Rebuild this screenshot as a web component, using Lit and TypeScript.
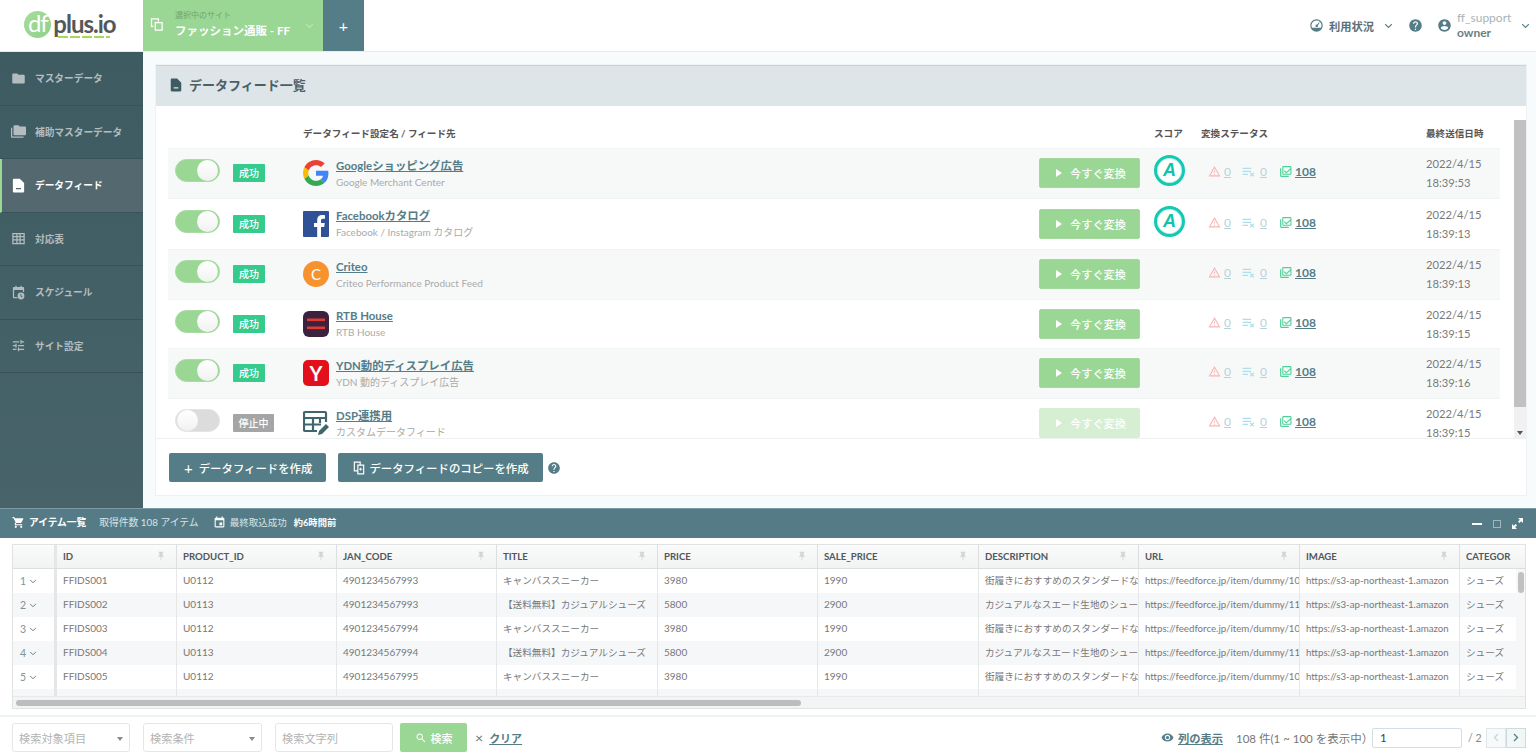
import { LitElement, html, css } from "lit";
import { customElement } from "lit/decorators.js";

const icon = (d: string, cls = "") => html`<svg class="ic ${cls}" viewBox="0 0 24 24" fill="currentColor"><path d="${d}"></path></svg>`;
const P = {
  folder: "M10 4H4c-1.1 0-2 .9-2 2v12c0 1.1.9 2 2 2h16c1.1 0 2-.9 2-2V8c0-1.1-.9-2-2-2h-8l-2-2z",
  folders: "M2 6H0v14c0 1.1.9 2 2 2h18v-2H2V6zm20-2h-8l-2-2H6c-1.1 0-2 .9-2 2v12c0 1.1.9 2 2 2h16c1.1 0 2-.9 2-2V6c0-1.1-.9-2-2-2z",
  file: "M14 1H5C3.9 1 3 1.9 3 3v18c0 1.1.9 2 2 2h14c1.1 0 2-.9 2-2V8l-7-7zM8 16h8v2H8v-2z",
  table: "M2 3h20v18H2V3zm2 2v3h4.500V5H4zm6.500 0v3h3V5h-3zm5 0v3H20V5h-4.500zM4 10v3h4.500v-3H4zm6.500 0v3h3v-3h-3zm5 0v3H20v-3h-4.500zM4 15v4h4.500v-4H4zm6.500 0v4h3v-4h-3zm5 0v4H20v-4h-4.500z",
  sched: "M7 1h2v2h6V1h2v2h2c1.100 0 2 .9 2 2v6h-2V8H5v11h5v2H5c-1.100 0-2-.9-2-2V5c0-1.100.9-2 2-2h2V1zm9 11a5.500 5.500 0 1 1 0 11 5.500 5.500 0 0 1 0-11zm-.8 2.500v3.400l2.600 1.500.7-1.100-2-1.200v-2.600h-1.300z",
  tune: "M3 17v2h6v-2H3zM3 5v2h10V5H3zm10 16v-2h8v-2h-8v-2h-2v6h2zM7 9v2H3v2h4v2h2V9H7zm14 4v-2H11v2h10zm-6-4h2V7h4V5h-4V3h-2v6z",
  cart: "M7 18c-1.100 0-1.990.9-1.990 2S5.900 22 7 22s2-.9 2-2-.9-2-2-2zM1 2v2h2l3.600 7.590-1.350 2.450c-.16.28-.25.61-.25.96 0 1.100.9 2 2 2h12v-2H7.420c-.14 0-.25-.11-.25-.25l.03-.12.9-1.630h7.450c.75 0 1.410-.41 1.750-1.030l3.580-6.490c.08-.14.12-.31.12-.48 0-.55-.45-1-1-1H5.210l-.94-2H1zm16 16c-1.100 0-1.990.9-1.990 2s.89 2 1.990 2 2-.9 2-2-.9-2-2-2z",
  event: "M17 12h-5v5h5v-5zM16 1v2H8V1H6v2H5c-1.110 0-1.990.9-1.990 2L3 19c0 1.100.89 2 2 2h14c1.100 0 2-.9 2-2V5c0-1.100-.9-2-2-2h-1V1h-2zm3 18H5V8h14v11z",
  help: "M12 2C6.480 2 2 6.480 2 12s4.480 10 10 10 10-4.480 10-10S17.520 2 12 2zm1 17h-2v-2h2v2zm2.070-7.750l-.9.920C13.450 12.900 13 13.500 13 15h-2v-.5c0-1.100.45-2.100 1.170-2.830l1.240-1.260c.37-.36.59-.86.59-1.410 0-1.100-.9-2-2-2s-2 .9-2 2H8c0-2.210 1.790-4 4-4s4 1.790 4 4c0 .88-.36 1.680-.93 2.250z",
  user: "M12 2C6.480 2 2 6.480 2 12s4.480 10 10 10 10-4.480 10-10S17.520 2 12 2zm0 3c1.660 0 3 1.340 3 3s-1.340 3-3 3-3-1.340-3-3 1.340-3 3-3zm0 14.200c-2.500 0-4.710-1.280-6-3.220.03-1.990 4-3.080 6-3.080 1.990 0 5.970 1.090 6 3.080-1.290 1.940-3.500 3.220-6 3.220z",
  gauge: "M12 2a10 10 0 1 0 0 20 10 10 0 0 0 0-20zm0 2a8 8 0 0 1 8 8c0 1.200-.27 2.400-.78 3.400H4.780A8 8 0 0 1 12 4zm3.900 2.700-3.100 3.900a2 2 0 1 0 1.500 1.300l2.700-4.600-1.100-.6z",
  eye: "M12 4.500C7 4.500 2.730 7.610 1 12c1.730 4.390 6 7.500 11 7.500s9.270-3.110 11-7.500c-1.730-4.390-6-7.500-11-7.500zM12 17c-2.760 0-5-2.240-5-5s2.240-5 5-5 5 2.240 5 5-2.240 5-5 5zm0-8c-1.660 0-3 1.340-3 3s1.340 3 3 3 3-1.340 3-3-1.340-3-3-3z",
  warn: "M12 5.990L19.530 19H4.470L12 5.990M12 2L1 21h22L12 2zm1 14h-2v2h2v-2zm0-6h-2v4h2v-4z",
  search: "M15.500 14h-.79l-.28-.27C15.410 12.590 16 11.110 16 9.500 16 5.910 13.090 3 9.500 3S3 5.910 3 9.500 5.910 16 9.500 16c1.610 0 3.090-.59 4.230-1.570l.27.28v.79l5 4.990L20.490 19l-4.990-5zm-6 0C7.010 14 5 11.990 5 9.500S7.010 5 9.500 5 14 7.010 14 9.500 11.990 14 9.500 14z",
  pin: "M16 9V4h1c.55 0 1-.45 1-1s-.45-1-1-1H7c-.55 0-1 .45-1 1s.45 1 1 1h1v5c0 1.660-1.340 3-3 3v2h5.970v7l1 1 1-1v-7H19v-2c-1.660 0-3-1.340-3-3z",
  listx: "M1 5h16v2.600H1V5zm0 5.500h16v2.600H1v-2.600zM1 16h10v2.600H1V16zm13.500-1 1.500-1.500 2.500 2.500 2.500-2.500 1.500 1.500-2.500 2.500 2.500 2.500-1.500 1.500-2.500-2.500-2.500 2.500-1.500-1.500 2.500-2.500-2.500-2.500z",
  check: "M2 6h2.200v14H18v2H4c-1.100 0-2-.9-2-2V6zm6-4h13c1.100 0 2 .9 2 2v12c0 1.100-.9 2-2 2H8c-1.100 0-2-.9-2-2V4c0-1.100.9-2 2-2zm0 2.200V16h13V8.800l-7.300 7-4.900-4.700 1.500-1.500 3.400 3.200 7.300-7V4.200H8z",
  copy: "M3 1h12v5h6v17H9v-5H3V1zm2 2v13h4V6h4V3H5zm6 5v13h8V8h-8zm1.500 5.500 2.300-2.300 1.100 1.100-1.100 1h2.700v1.500h-2.700l1.100 1-1.100 1.100-2.300-2.300v-1.100z",
  site: "M3 2h13v5h-2V4H5v10h2v2H3V2zm6 6h13v14H9V8zm2 2v10h9V10h-9z",
};

const chev = (cls = "") => html`<svg class="chev ${cls}" viewBox="0 0 12 8" fill="none" stroke="currentColor" stroke-width="1.500"><path d="M1.500 1.500 6 6l4.500-4.500"></path></svg>`;

const G = html`<svg class="logo" viewBox="0 0 48 48">
  <path fill="#EA4335" d="M24 9.500c3.540 0 6.710 1.220 9.210 3.600l6.850-6.850C35.900 2.380 30.470 0 24 0 14.620 0 6.510 5.380 2.560 13.220l7.980 6.190C12.430 13.720 17.740 9.500 24 9.500z"></path>
  <path fill="#4285F4" d="M46.980 24.550c0-1.570-.15-3.090-.38-4.550H24v9.020h12.940c-.58 2.960-2.260 5.480-4.780 7.180l7.730 6c4.510-4.180 7.090-10.360 7.090-17.650z"></path>
  <path fill="#FBBC05" d="M10.530 28.590c-.48-1.450-.76-2.990-.76-4.590s.27-3.140.76-4.590l-7.980-6.190C.92 16.460 0 20.120 0 24c0 3.880.92 7.540 2.560 10.780l7.970-6.190z"></path>
  <path fill="#34A853" d="M24 48c6.480 0 11.930-2.130 15.890-5.810l-7.730-6c-2.150 1.450-4.920 2.300-8.160 2.300-6.260 0-11.570-4.220-13.470-9.910l-7.980 6.190C6.510 42.620 14.620 48 24 48z"></path>
</svg>`;
const FB = html`<svg class="logo" viewBox="0 0 26 26"><rect width="26" height="26" rx="1" fill="#2f5196"></rect><path fill="#fff" d="M18 26V16h3.200l.5-3.900H18V9.700c0-1.100.4-1.900 2-1.900h2V4.300c-.4 0-1.600-.2-2.900-.2-2.900 0-4.900 1.800-4.900 5v3H11V16h3.200v10H18z"></path></svg>`;
const CR = html`<svg class="logo" viewBox="0 0 26 26"><circle cx="13" cy="13" r="13" fill="#f7932e"></circle></svg><span class="logo-letter">C</span>`;
const RTB = html`<svg class="logo" viewBox="0 0 26 26"><rect width="26" height="26" rx="6" fill="#3b2340"></rect><rect x="4" y="7.500" width="18" height="2.600" fill="#e23a33"></rect><rect x="4" y="15.500" width="18" height="2.600" fill="#e23a33"></rect></svg>`;
const Y = html`<svg class="logo" viewBox="0 0 26 26"><rect width="26" height="26" rx="5" fill="#e30f1c"></rect></svg><span class="logo-letter y">Y</span>`;
const DSP = html`<svg class="logo" viewBox="0 0 26 26" fill="none" stroke="#3f666d" stroke-width="2.200"><path d="M14 21H2a1 1 0 0 1-1-1V3a1 1 0 0 1 1-1h20a1 1 0 0 1 1 1v9"></path><path d="M1 8h22M10 8V21M1 14.500h17M17 8V13"></path><path d="M15 25l1-4 7-7 3 3-7 7-4 1z" fill="#3f666d" stroke="none"></path></svg>`;

interface Feed { on: boolean; name: string; sub: string; logo: unknown; score: boolean; date: string; time: string; h: number; }
const feeds: Feed[] = [
  { on: true, name: "Googleショッピング広告", sub: "Google Merchant Center", logo: G, score: true, date: "2022/4/15", time: "18:39:53", h: 50 },
  { on: true, name: "Facebookカタログ", sub: "Facebook / Instagram カタログ", logo: FB, score: true, date: "2022/4/15", time: "18:39:13", h: 51 },
  { on: true, name: "Criteo", sub: "Criteo Performance Product Feed", logo: CR, score: false, date: "2022/4/15", time: "18:39:13", h: 50 },
  { on: true, name: "RTB House", sub: "RTB House", logo: RTB, score: false, date: "2022/4/15", time: "18:39:15", h: 49 },
  { on: true, name: "YDN動的ディスプレイ広告", sub: "YDN 動的ディスプレイ広告", logo: Y, score: false, date: "2022/4/15", time: "18:39:16", h: 50 },
  { on: false, name: "DSP連携用", sub: "カスタムデータフィード", logo: DSP, score: false, date: "2022/4/15", time: "18:39:15", h: 50 },
];

const nav = [
  { t: "マスターデータ", i: P.folder }, { t: "補助マスターデータ", i: P.folders }, { t: "データフィード", i: P.file, on: true },
  { t: "対応表", i: P.table }, { t: "スケジュール", i: P.sched }, { t: "サイト設定", i: P.tune },
];

const cols = ["ID", "PRODUCT_ID", "JAN_CODE", "TITLE", "PRICE", "SALE_PRICE", "DESCRIPTION", "URL", "IMAGE", "CATEGOR"];
const row = (n: number) => {
  const a = n % 2 === 1;
  const jan = 4901234567993 + Math.floor((n - 1) / 2);
  return [
    "FFIDS00" + n, a ? "U0112" : "U0113", String(jan),
    a ? "キャンバススニーカー" : "【送料無料】カジュアルシューズ",
    a ? "3980" : "5800", a ? "1990" : "2900",
    a ? "街履きにおすすめのスタンダードな" : "カジュアルなスエード生地のシュー",
    a ? "https://feedforce.jp/item/dummy/10" : "https://feedforce.jp/item/dummy/11",
    "https://s3-ap-northeast-1.amazon", "シューズ",
  ];
};

@customElement("app-root")
export class AppRoot extends LitElement {
  static styles = css`
    :host { display: flex; flex-direction: column; width: 1536px; height: 755px; overflow: hidden; background: #fff; color: #666;
      font-family: "Lato", "Noto Sans CJK JP", sans-serif; font-size: 12px; }
    * { box-sizing: border-box; }
    .ic { width: 14px; height: 14px; flex: none; display: block; }
    .chev { width: 9px; height: 6px; flex: none; display: block; }

    header { height: 52px; flex: none; display: flex; border-bottom: 1px solid #e6ecee; }
    .brand { width: 143px; flex: none; display: flex; align-items: center; justify-content: center; padding: 0 3px 3px 0; }
    .mark { width: 27px; height: 27px; border-radius: 50%; background: linear-gradient(135deg, #a7dc9a, #8fd18a); color: #fff; font-weight: 400; font-size: 24px; line-height: 24px; text-align: center; letter-spacing: -1px; margin-right: 2px; }
    .word { position: relative; color: #55585a; font-weight: 700; font-size: 24px; letter-spacing: -1px; line-height: 28px; }
    .word::after { content: ""; position: absolute; left: 5px; right: 6px; bottom: 0; height: 2px; background: repeating-linear-gradient(90deg, #a6d95a 0 10px, transparent 10px 12px); }
    .site { width: 180px; flex: none; height: 51px; background: #9ad694; color: #fff; display: flex; align-items: center; padding: 0 9px 0 6px; }
    .site .ic { width: 15px; height: 15px; margin-right: 12px; margin-top: -2px; }
    .site .tx { flex: 1; margin-left: -1px; }
    .site small { display: block; font-size: 8px; color: #6fa56e; line-height: 11px; margin-top: -1px; }
    .site b { display: block; font-size: 11.500px; font-weight: 700; line-height: 20px; }
    .site .chev { color: #c4e6bd; }
    .add { width: 41px; flex: none; height: 51px; background: #557d87; color: #fff; display: flex; align-items: center; justify-content: center; font-size: 16px; }
    .hr { margin-left: auto; display: flex; align-items: center; color: #557d87; padding-right: 6px; }
    .hr .ic { width: 15px; height: 15px; }
    .hr b { font-size: 11.250px; color: #5d7077; margin-left: 5px; font-weight: 700; }
    .hr .g1 { margin-right: 15px; }
    .hr .g1 .chev { margin-left: 10px; }
    .hr .g { display: flex; align-items: center; }
    .hr .help { margin-right: 14px; }
    .hr .usr { line-height: 15px; margin: 0 9px 2px 5px; font-size: 12px; width: 55px; }
    .hr .usr span { color: #a9b4b8; display: block; }
    .hr .usr em { font-style: normal; font-weight: 700; color: #6c7f85; display: block; }

    .mid { flex: none; height: 456px; display: flex; }
    nav { width: 143px; flex: none; background: linear-gradient(180deg, #3e5b62, #48646a); }
    .ni { height: 53.500px; display: flex; align-items: center; padding-left: 11px; color: #b3bdc0; font-size: 9.700px; font-weight: 700; border-bottom: 1px solid #38525a; }
    .ni .ic { width: 15px; height: 15px; margin-right: 9px; color: #b3bdc0; }
    .ni.on { background: #54696f; color: #fff; border-left: 2px solid #9ad694; padding-left: 9px; }
    .ni.on .ic { color: #fff; }
    main { flex: 1; min-width: 0; background: #f8fbfc; padding: 12px 9px 12px 12px; }
    .panel { height: 100%; background: #fff; border: 1px solid #eef2f3; display: flex; flex-direction: column; }
    .ph { height: 41px; flex: none; background: #dde5e8; border-top: 1px solid #c9d4d8; display: flex; align-items: center; padding: 0 0 3px 13px; color: #4c5f66; font-size: 13px; font-weight: 700; }
    .ph .ic { margin-right: 6px; width: 14px; height: 14px; color: #3e5b62; }
    .pb { flex: none; height: 332px; display: flex; padding-left: 12px; padding-right: 1px; }
    .list { width: 1332px; flex: none; overflow: hidden; margin-top: 14px; }
    .fhead, .feed { display: grid; grid-template-columns: 65px 70px 33px 1fr 115px 47px 225px 74px; align-items: center; }
    .fhead { height: 28px; font-size: 9.600px; font-weight: 700; color: #555; padding-bottom: 2px; }
    .fname { margin-left: -33px; white-space: nowrap; }
    .feed { border-top: 1px solid #f1f4f5; overflow: hidden; flex: none; }
    .feed:nth-child(even) { background: #f7f9f9; }
    .tg { margin: 0 0 6px 7px; width: 45px; height: 23px; border-radius: 12px; background: #9ad694; border: 1px solid #a9dca3; position: relative; }
    .tg::after { content: ""; position: absolute; right: 1px; top: 0; width: 21px; height: 21px; border-radius: 50%; background: linear-gradient(180deg, #fff, #f0f2f0); }
    .tg.off { background: #dcdcdc; border-color: #e4e4e4; }
    .tg.off::after { right: auto; left: 1px; }
    .bdw { margin-bottom: 1px; }
    .bd { display: inline-block; height: 18px; line-height: 18px; width: 32px; text-align: center; border-radius: 1px; background: #35cb8d; color: #fff; font-size: 10px; font-weight: 500; }
    .bd.off { width: 41px; background: #a5a5a5; }
    .lg { position: relative; width: 26px; height: 26px; margin-bottom: 1px; }
    .logo { width: 26px; height: 26px; display: block; }
    .logo-letter { position: absolute; inset: 0; color: #fff; text-align: center; font-size: 15px; line-height: 26px; font-weight: 400; }
    .logo-letter.y { font-size: 20px; font-weight: 700; }
    .nm a { display: block; color: #557d87; font-size: 11.400px; font-weight: 700; text-decoration: underline; line-height: 17px; }
    .nm span { display: block; color: #aaa; font-size: 10px; line-height: 17px; }
    .run { width: 101px; height: 30px; margin-bottom: 1px; padding-left: 3px; border-radius: 2px; background: #9ad694; color: #fff; font-size: 11.200px; font-weight: 500; display: flex; align-items: center; justify-content: center; gap: 8px; border: 1px solid #a3d99d; }
    .run.off { background: #d6efd3; border-color: #d6efd3; }
    .tri { width: 0; height: 0; border-left: 6px solid #fff; border-top: 4px solid transparent; border-bottom: 4px solid transparent; }
    .sc { margin-bottom: 6px; min-height: 1px; }
    .score { width: 31px; height: 31px; border-radius: 50%; background: #fff; border: 3.500px solid #14c8b2; color: #10c3ab; font-family: "Liberation Sans", sans-serif; font-weight: 700; font-style: italic; font-size: 18px; line-height: 24px; text-align: center; box-shadow: inset 0 0 0 1px #bfeee7; }
    .st { display: flex; align-items: center; padding-left: 7px; font-size: 12px; margin-bottom: 4px; }
    .st .ic { width: 13px; height: 13px; }
    .st u { margin-left: 3px; }
    .st .r { color: #fbb4b4; } .st .b { color: #aadfec; } .st .gr { color: #4fd09a; }
    .st u.z { color: #b9d2d8; width: 15px; } .st u.n { color: #557d87; font-weight: 700; }
    .st .s1 { margin-right: 3px; } .st .s2 { margin-right: 4px; }
    .st u.z2 { margin-left: 5px; }
    .dt { font-size: 11.200px; line-height: 19px; color: #7a7a7a; white-space: nowrap; margin-bottom: 1px; }
    .vs { margin-left: 14px; width: 12px; margin-top: 14px; flex: none; background: #f1f1f1; display: flex; flex-direction: column; align-items: center; }
    .vs i { display: block; width: 100%; height: 287px; background: #c1c1c1; }
    .vs s { margin-top: auto; margin-bottom: 3px; width: 0; height: 0; border-top: 4px solid #555; border-left: 3px solid transparent; border-right: 3px solid transparent; }
    .pf { flex: 1; border-top: 1px solid #eef1f2; display: flex; align-items: center; padding: 1px 0 0 13px; }
    .btn { height: 29px; background: #557d87; color: #fff; font-size: 11.400px; font-weight: 500; border-radius: 2px; display: flex; align-items: center; padding: 0 14px; white-space: nowrap; }
    .btn .ic { width: 14px; height: 14px; margin-right: 3px; }
    .btn .plus { font-size: 15px; font-weight: 400; margin: 0 6px 0 1px; }
    .btn + .btn { margin-left: 12px; }
    .qm { width: 13px; height: 13px; color: #557d87; margin-left: 4px; }

    .bar { height: 30px; flex: none; background: #557c86; color: #fff; display: flex; align-items: center; padding: 0 9px 3px 12px; font-size: 9.800px; border-top: 1px solid #7b9aa2; }
    .bar .ic { width: 13px; height: 13px; }
    .bar b { font-size: 9.700px; font-weight: 700; margin-left: 4px; }
    .bar span { color: #d8e3e6; }
    .bar .a { margin-left: 13px; margin-right: 14px; }
    .bar .l { margin-left: 4px; margin-right: 7px; font-size: 9.500px; }
    .bar b.e { margin-left: 0; font-size: 9.300px; }
    .wc { margin-left: auto; display: flex; margin-top: 3px; }
    .wc div { width: 20px; height: 20px; display: flex; align-items: center; justify-content: center; }
    .wc .min { width: 10px; height: 2px; background: #fff; }
    .wc .max { width: 8px; height: 8px; border: 1px solid #9fb7bd; }
    .wrap { flex: none; height: 179px; padding: 6px 10px 7px 12px; border-bottom: 2px solid #edf2f3; }
    .grid { height: 165px; border: 1px solid #dfe3e4; display: flex; flex-direction: column; overflow: hidden; }
    .tr { display: grid; grid-template-columns: 44px 120px 160px 160px 161px 160px 161px 160px 161px 160px 66px; width: 1513px; flex: none; }
    .thead { height: 24px; background: linear-gradient(180deg, #fbfbfb, #f1f2f2); border-bottom: 1px solid #dcdfe0; }
    .th { font-size: 9.600px; font-weight: 700; color: #50585c; display: flex; align-items: center; padding-left: 6px; border-right: 1px solid #dcdfe0; position: relative; min-width: 0; overflow: hidden; white-space: nowrap; }
    .th:first-child, .td:first-child { border-right: 3px solid #e4e6e7; padding-left: 0; }
    .th:last-child, .td:last-child { border-right: 0; }
    .th .ic { position: absolute; right: 10px; top: 6px; width: 10px; height: 10px; color: #d0d5d6; }
    .tbody { display: flex; height: 127px; flex: none; }
    .rows { width: 1503px; flex: none; overflow: hidden; }
    .rows .tr { height: 24px; width: 1503px; grid-template-columns: 44px 120px 160px 160px 161px 160px 161px 160px 161px 160px 56px; }
    .rows .tr:nth-child(even) { background: #f5f7f8; }
    .td { font-size: 10px; color: #787878; padding-left: 6px; line-height: 23px; border-right: 1px solid #e5e7e8; white-space: nowrap; overflow: hidden; min-width: 0; }
    .td.jp { font-size: 9.650px; }
    .td.u { font-size: 9.700px; }
    .td.idx { display: flex; align-items: center; gap: 3px; color: #7f9499; padding-left: 7px; font-size: 10.500px; }
    .td.idx .chev { width: 8px; height: 5px; color: #557d87; }
    .vb { flex: 1; background: #f7f7f7; }
    .vb i { display: block; width: 6px; height: 21px; margin: 3px auto 0; border-radius: 3px; background: #c1c1c1; }
    .hb { flex: 1; min-height: 0; background: #f3f4f4; border-top: 1px solid #e7e9ea; display: flex; align-items: center; padding-left: 3px; }
    .hb i { display: block; width: 785px; height: 6px; border-radius: 3px; background: #bdbdbd; }

    .tools { flex: 1; display: flex; align-items: center; padding: 3px 10px 0 12px; }
    .sel, .inp { width: 118px; height: 29px; border: 1px solid #e3e7e8; border-radius: 3px; color: #b3b3b3; font-size: 11.200px; display: flex; align-items: center; padding: 0 6px; position: relative; }
    .sel { margin-right: 13px; }
    .sel.w { width: 119px; }
    .sel::after { content: ""; position: absolute; right: 6px; top: 13px; border-top: 4px solid #8a8a8a; border-left: 3.500px solid transparent; border-right: 3.500px solid transparent; }
    .inp { margin-right: 7px; }
    .go { width: 67px; height: 29px; border-radius: 2px; background: #9ad694; color: #fff; font-size: 11px; font-weight: 500; display: flex; align-items: center; justify-content: center; gap: 4px; }
    .go .ic { width: 12px; height: 12px; }
    .clr { margin-left: 8px; color: #557d87; font-size: 11px; font-weight: 700; display: flex; align-items: center; gap: 6px; }
    .clr span { font-weight: 400; font-size: 14px; }
    .pg { margin-left: auto; display: flex; align-items: center; }
    .pg .cols { display: flex; align-items: center; color: #557d87; font-weight: 700; font-size: 11.250px; margin-right: 13px; gap: 4px; white-space: nowrap; }
    .pg .cols .ic { width: 13px; height: 13px; }
    .pg .cnt { font-size: 11.500px; color: #777; width: 136px; white-space: nowrap; }
    .pg .box { width: 90px; height: 20px; border: 1px solid #d3e0e3; border-radius: 2px; font-size: 11.500px; color: #444; padding-left: 7px; line-height: 18px; }
    .pg .of { font-size: 10.500px; color: #888; margin: 0 7px 0 6px; width: 11px; white-space: nowrap; }
    .pb2 { width: 20px; height: 20px; border: 1px solid #dde7ea; background: #f7fafa; display: flex; align-items: center; justify-content: center; color: #ccd6d8; }
    .pb2.n { color: #557d87; background: #f1f6f7; border-color: #cddbdf; }
    .pb2 svg { width: 6px; height: 9px; }
  `;

  render() {
    return html`
      <header>
        <div class="brand"><div class="mark">df</div><div class="word">plus.io</div></div>
        <div class="site">
          ${icon(P.site)}
          <div class="tx"><small>選択中のサイト</small><b>ファッション通販 - FF</b></div>
          ${chev()}
        </div>
        <div class="add">+</div>
        <div class="hr">
          <div class="g g1">${icon(P.gauge)}<b>利用状況</b>${chev()}</div>
          <div class="g help">${icon(P.help)}</div>
          <div class="g">${icon(P.user)}<div class="usr"><span>ff_support</span><em>owner</em></div>${chev()}</div>
        </div>
      </header>
      <div class="mid">
        <nav>${nav.map((n) => html`<div class="ni ${n.on ? "on" : ""}">${icon(n.i)}${n.t}</div>`)}</nav>
        <main>
          <div class="panel">
            <div class="ph">${icon(P.file)}データフィード一覧</div>
            <div class="pb">
              <div class="list">
                <div class="fhead"><div></div><div></div><div></div><div class="fname">データフィード設定名 / フィード先</div><div></div><div>スコア</div><div>変換ステータス</div><div>最終送信日時</div></div>
                ${feeds.map((f) => html`
                  <div class="feed" style="height:${f.h}px">
                    <div class="tg ${f.on ? "" : "off"}"></div>
                    <div class="bdw"><span class="bd ${f.on ? "" : "off"}">${f.on ? "成功" : "停止中"}</span></div>
                    <div class="lg">${f.logo}</div>
                    <div class="nm"><a>${f.name}</a><span>${f.sub}</span></div>
                    <div class="run ${f.on ? "" : "off"}"><i class="tri"></i>今すぐ変換</div>
                    <div class="sc">${f.score ? html`<div class="score">A</div>` : ""}</div>
                    <div class="st">
                      <span class="r">${icon(P.warn)}</span><u class="z">0</u><span class="s1"></span>
                      <span class="b">${icon(P.listx)}</span><u class="z z2">0</u><span class="s2"></span>
                      <span class="gr">${icon(P.check)}</span><u class="n">108</u>
                    </div>
                    <div class="dt">${f.date}<br />${f.time}</div>
                  </div>`)}
              </div>
              <div class="vs"><i></i><s></s></div>
            </div>
            <div class="pf">
              <div class="btn"><span class="plus">+</span>データフィードを作成</div>
              <div class="btn">${icon(P.copy)}データフィードのコピーを作成</div>
              <span class="qm">${icon(P.help)}</span>
            </div>
          </div>
        </main>
      </div>
      <div class="bar">
        ${icon(P.cart)}<b>アイテム一覧</b><span class="a">取得件数 108 アイテム</span>
        ${icon(P.event)}<span class="l">最終取込成功</span><b class="e">約6時間前</b>
        <div class="wc"><div><i class="min"></i></div><div><i class="max"></i></div><div><svg width="11" height="11" viewBox="0 0 11 11" fill="#fff"><path d="M6 0h5v5L9.200 3.200 7.300 5 6 3.700 7.800 1.800zM5 11H0V6l1.800 1.800L3.700 6 5 7.300 3.200 9.200z"></path></svg></div></div>
      </div>
      <div class="wrap">
        <div class="grid">
          <div class="tr thead"><div class="th"></div>${cols.map((c, i) => html`<div class="th">${c}${i < 9 ? icon(P.pin) : ""}</div>`)}</div>
          <div class="tbody">
            <div class="rows">
              ${[1, 2, 3, 4, 5, 6].map((n) => html`<div class="tr">
                <div class="td idx">${n} ${chev()}</div>
                ${row(n).map((v, i) => html`<div class="td ${i === 3 || i === 6 || i === 9 ? "jp" : ""} ${i === 7 || i === 8 ? "u" : ""}">${v}</div>`)}
              </div>`)}
            </div>
            <div class="vb"><i></i></div>
          </div>
          <div class="hb"><i></i></div>
        </div>
      </div>
      <div class="tools">
        <div class="sel">検索対象項目</div>
        <div class="sel w">検索条件</div>
        <div class="inp">検索文字列</div>
        <div class="go">${icon(P.search)}検索</div>
        <div class="clr"><span>×</span><u>クリア</u></div>
        <div class="pg">
          <div class="cols">${icon(P.eye)}<u>列の表示</u></div>
          <div class="cnt">108 件(1 ~ 100 を表示中）</div>
          <div class="box">1</div>
          <div class="of">/ 2</div>
          <div class="pb2"><svg viewBox="0 0 6 9" fill="none" stroke="currentColor" stroke-width="1.300"><path d="M5 1 1.500 4.500 5 8"></path></svg></div>
          <div class="pb2 n"><svg viewBox="0 0 6 9" fill="none" stroke="currentColor" stroke-width="1.300"><path d="M1 1l3.500 3.500L1 8"></path></svg></div>
        </div>
      </div>
    `;
  }
}
